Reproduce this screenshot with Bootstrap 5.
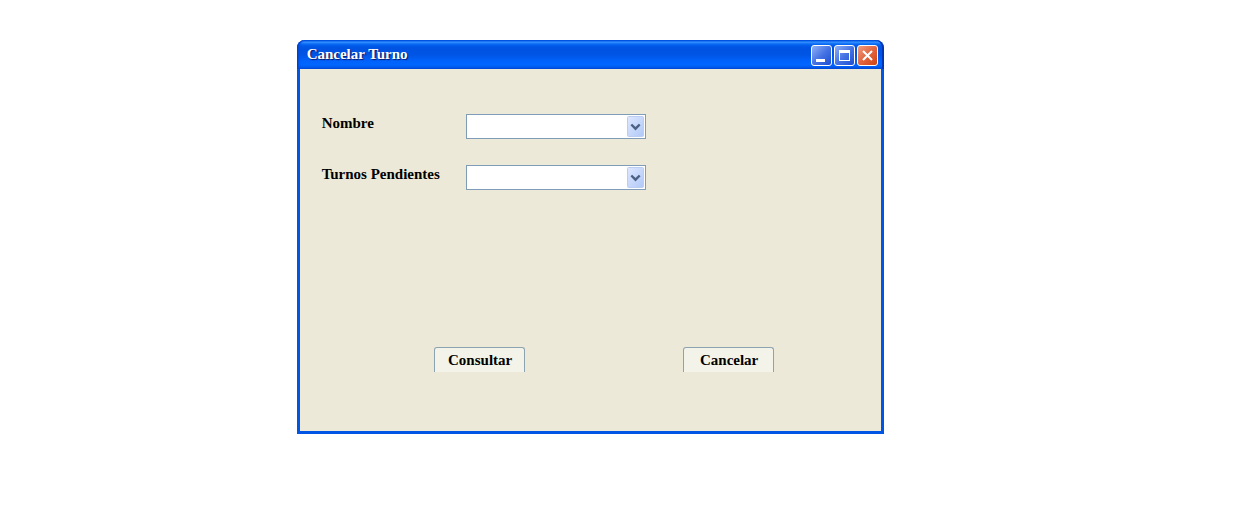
<!DOCTYPE html>
<html lang="es">
<head>
<meta charset="utf-8">
<meta name="viewport" content="width=device-width, initial-scale=1">
<title>Cancelar Turno</title>
<link rel="stylesheet" href="https://cdn.jsdelivr.net/npm/bootstrap@5.3.0/dist/css/bootstrap.min.css">
<style>
body { background: #fff; color: #000; font-family: "Liberation Serif", "Times New Roman", serif; font-size: 15px; line-height: 18px; font-weight: 700; }
.desk { padding: 40px 0 40px 24%; }
.xp-window { width: 62.5%; min-width: 480px; }
.xp-title {
  height: 29px; padding: 1px 6px 0 10px; color: #fff; border-radius: 8px 8px 0 0;
  background: linear-gradient(#0050dc 0, #0058e6 1px, #3a94ff 2px, #0a6cf6 4px, #0058e6 6px, #0053e1 9px, #0055e5 15px, #0062fb 21px, #0066ff 25px, #005bf0 27px, #0046d2 29px);
  box-shadow: inset 1px 0 #0040cc, inset -2px 0 #0034b4, inset 3px 0 2px -1px #0048d6;
}
.xp-title h1 { font-size: 15px; line-height: 18px; font-weight: 700; text-shadow: 1px 1px 1px #001a70; }
.cap-btn { width: 21px; height: 21px; padding: 0; border: 1px solid #fff; border-radius: 3px; background: linear-gradient(135deg, #8fb0f6 0, #4674e4 50%, #1d4ed2 100%); }
.cap-close { background: linear-gradient(135deg, #ee9c80 0, #e26540 50%, #d24310 100%); }
.cap-btn svg { display: block; }
.xp-body { background: #ece9d8; border: solid #0055e5; border-width: 0 3px 3px; padding: 45px 22px 59px; }
.field-label { width: 144px; }
.xp-select {
  width: 180px; height: 25px; border: 1px solid #7f9db9; border-radius: 0; appearance: none; padding: 0 20px 0 4px;
  background: #fff url("data:image/svg+xml,%3Csvg xmlns='http://www.w3.org/2000/svg' width='17' height='21'%3E%3Cdefs%3E%3ClinearGradient id='g' x2='1' y2='1'%3E%3Cstop stop-color='%23dfe8ff'/%3E%3Cstop offset='1' stop-color='%23b0c8f7'/%3E%3C/linearGradient%3E%3C/defs%3E%3Crect x='.5' y='.5' width='16' height='20' rx='1' fill='url(%23g)' stroke='%23bccdf4'/%3E%3Cpath d='M4.3 8.5L8.5 12.7L12.7 8.5' fill='none' stroke='%234d6185' stroke-width='2.4'/%3E%3C/svg%3E") no-repeat right 1px top 1px;
}
.fields { row-gap: 26px; }
.actions { margin-top: 157px; padding-left: 112px; column-gap: 158px; }
.xp-btn { width: 91px; height: 25px; padding: 0 0 0 2px; border: 1px solid #8ca3b0; border-bottom: 0; border-radius: 3px 3px 0 0; background: #f4f3ea; color: #000; font-weight: 700; line-height: 24px; }
</style>
</head>
<body>
<main class="desk">
  <section class="xp-window">
    <header class="xp-title d-flex justify-content-between">
      <h1 class="mb-0 pt-1">Cancelar Turno</h1>
      <div class="d-flex pt-1" style="gap:2px">
        <button type="button" class="cap-btn" aria-label="Minimizar"><svg width="19" height="19"><path fill="#fff" d="M4 13h9v3H4z"/></svg></button>
        <button type="button" class="cap-btn" aria-label="Maximizar"><svg width="19" height="19"><path fill="#fff" fill-rule="evenodd" d="M4 4h11v11H4zM5 7v7h9V7z"/></svg></button>
        <button type="button" class="cap-btn cap-close" aria-label="Cerrar"><svg width="19" height="19"><path fill="none" stroke="#fff" stroke-width="2" d="M5 5l9 9M14 5l-9 9"/></svg></button>
      </div>
    </header>
    <form class="xp-body">
      <div class="fields d-flex flex-column">
        <div class="d-flex"><label class="field-label" for="nombre">Nombre</label><select class="xp-select" id="nombre"><option></option></select></div>
        <div class="d-flex"><label class="field-label" for="turnos">Turnos Pendientes</label><select class="xp-select" id="turnos"><option></option></select></div>
      </div>
      <div class="actions d-flex">
        <button type="button" class="xp-btn">Consultar</button>
        <button type="button" class="xp-btn">Cancelar</button>
      </div>
    </form>
  </section>
</main>
<script src="https://cdn.jsdelivr.net/npm/bootstrap@5.3.0/dist/js/bootstrap.bundle.min.js"></script>
</body>
</html>
